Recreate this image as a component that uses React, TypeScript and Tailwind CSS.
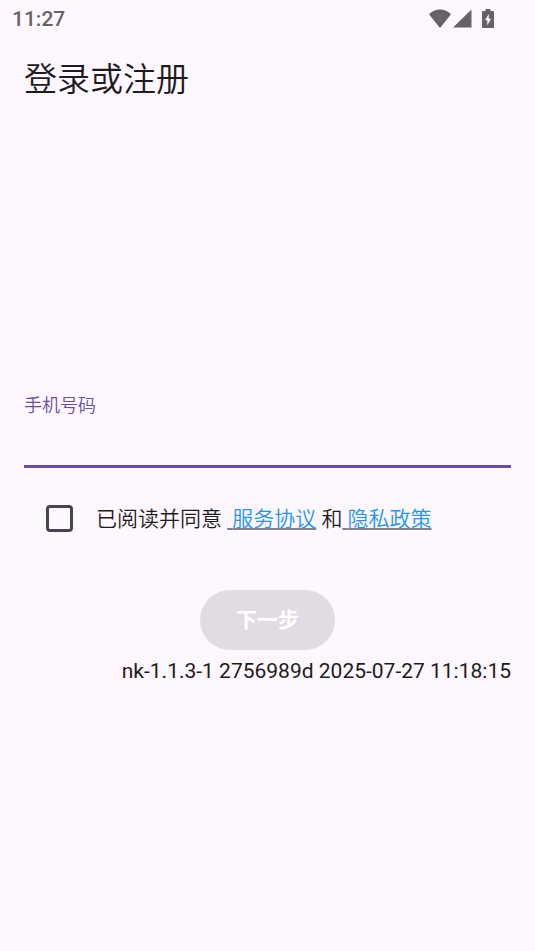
import React, { useState } from 'react';

const APP_VERSION = 'nk-1.1.3-1 2756989d 2025-07-27 11:18:15';

const App: React.FC = () => {
  const [phone, setPhone] = useState('');
  const [agreed, setAgreed] = useState(false);

  const canSubmit = agreed && phone.trim().length > 0;

  return (
    <div
      lang="zh-CN"
      className="flex min-h-screen flex-col bg-[#fef7ff] font-['Roboto','Noto_Sans_CJK_SC',sans-serif] text-[21px] leading-[30px] text-[#1d1b20]"
    >
      <StatusBar />

      <header className="flex h-[82px] items-center px-6 pt-1">
        <h1 className="text-[33px] leading-10 font-[350]">登录或注册</h1>
      </header>

      <main className="flex flex-1 flex-col justify-center px-6">
        <form onSubmit={e => e.preventDefault()}>
          {/* Phone number */}
          <div className="flex h-[84px] flex-col border-b-3 border-[#6750a4] pt-2">
            <label htmlFor="phone" className="text-lg leading-7 font-[350] text-[#6750a4]">手机号码</label>
            <input
              id="phone"
              type="tel"
              value={phone}
              onChange={e => setPhone(e.target.value)}
              className="w-full flex-1 bg-transparent text-2xl outline-none"
            />
          </div>

          {/* Terms */}
          <div className="mt-[15px] flex h-[71px] items-center pl-[22px]">
            <input
              id="agree"
              type="checkbox"
              checked={agreed}
              onChange={e => setAgreed(e.target.checked)}
              className="mr-[23px] size-[27px] shrink-0 appearance-none rounded-sm border-3 border-[#49454f] checked:border-[#6750a4] checked:bg-[#6750a4]"
            />
            <div className="font-[350]">
              <label htmlFor="agree">已阅读并同意 </label>
              <TermsLink href="#terms">服务协议</TermsLink>
              {' '}和
              <TermsLink href="#privacy">隐私政策</TermsLink>
            </div>
          </div>

          <div className="mt-9 flex justify-center">
            <button
              type="submit"
              disabled={!canSubmit}
              className="h-[60px] rounded-full bg-[#6750a4] px-9 font-bold text-white disabled:bg-[#e2dbe3]"
            >
              下一步
            </button>
          </div>
        </form>

        <p className="mt-1.5 text-right">{APP_VERSION}</p>
      </main>
    </div>
  );
};

interface TermsLinkProps {
  href: string;
  children: React.ReactNode;
}

const TermsLink: React.FC<TermsLinkProps> = ({ href, children }) => (
  <a href={href} className="text-[#2196f3] underline decoration-[#85808a] decoration-2 underline-offset-2">
    {'\u00a0'}{children}
  </a>
);

const StatusBar: React.FC = () => (
  <div className="flex h-[37px] items-center justify-between pr-[41px] pl-3 font-medium text-[#666268]">
    <span>11:27</span>
    <div className="flex items-center gap-[2px]">
      {/* Wi-Fi */}
      <svg width="22" height="20" viewBox="0 0 22 20" fill="currentColor" aria-hidden="true">
        <path d="M11 19 0 5.200C3 2.600 6.800 .5 11 .5s8 2.100 11 4.700z" />
      </svg>
      {/* Signal */}
      <svg width="19" height="20" viewBox="0 0 19 20" fill="currentColor" aria-hidden="true">
        <path d="M18.500 .5v18H0z" />
      </svg>
      {/* Battery */}
      <svg width="12" height="20" viewBox="0 0 12 20" fill="currentColor" aria-hidden="true" className="ml-2">
        <path fillRule="evenodd" d="M3.500 0h5v2H11a1 1 0 011 1v15a1 1 0 01-1 1H1a1 1 0 01-1-1V3a1 1 0 011-1h2.500zM6.800 5 3 11.300h2.300v5L9 9.700H6.800z" />
      </svg>
    </div>
  </div>
);

export default App;
